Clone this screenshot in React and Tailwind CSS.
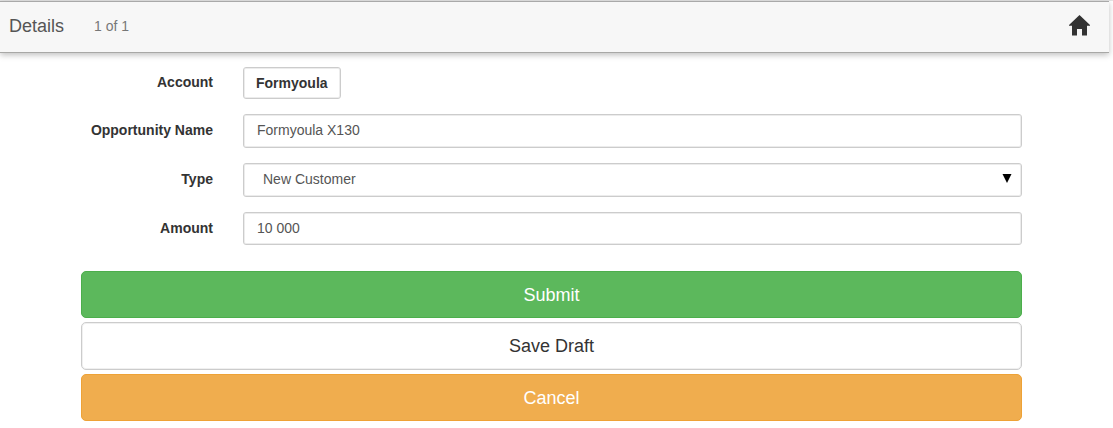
const labelClass = "w-[132px] shrink-0 pb-0.5 text-right text-sm font-bold text-[#333333]";
const fieldClass =
  "w-full rounded-[3px] border border-[#cccccc] bg-white px-[13px] pb-0.5 text-sm text-[#555555] shadow-[inset_0_0_0_1px_#ececec] outline-none";
const buttonClass = "w-full rounded-[5px] border text-lg";

function Header() {
  return (
    <header className="mr-1 flex h-[52px] items-center justify-between border-t border-b border-t-[#a9a9a9] border-b-[#a8a8a6] bg-[#f7f7f7] pr-[19px] pb-[3px] pl-[9px] shadow-[0_2px_6px_rgba(0,0,0,0.25)]">
      <div className="flex items-center gap-[30px]">
        <h1 className="text-lg text-[#555555]">Details</h1>
        <span className="text-sm text-[#777777]">1 of 1</span>
      </div>
      <a href="#home" aria-label="Home">
        <svg width="21" height="21" viewBox="0 0 21 21" fill="#333333" aria-hidden="true">
          <path d="M10.5 0 L21 10 V10.700 H18 V20.500 H13 V14 H8 V20.500 H3 V10.700 H0 V10 Z" />
        </svg>
      </a>
    </header>
  );
}

function Row({ id, label, children }) {
  return (
    <div className="flex items-center gap-[30px]">
      <label htmlFor={id} className={labelClass}>
        {label}
      </label>
      <div className="relative min-w-0 flex-1">{children}</div>
    </div>
  );
}

export default function App() {
  return (
    <div className="bg-white pb-[7px] font-['Liberation_Sans',Arial,sans-serif]">
      <div className="h-px bg-[#e4e4e4]" />
      <Header />
      <form className="pt-[14px] pr-[91px] pl-[81px]" onSubmit={(e) => e.preventDefault()}>
        <div className="mb-[26px] flex flex-col gap-[15px]">
          <Row id="account" label="Account">
            <button
              id="account"
              type="button"
              className="block h-8 rounded-[3px] border border-[#cccccc] bg-white px-3 text-sm font-bold text-[#333333] shadow-[inset_0_0_0_1px_#ececec]"
            >
              Formyoula
            </button>
          </Row>
          <Row id="name" label="Opportunity Name">
            <input id="name" type="text" defaultValue="Formyoula X130" className={`block h-[34px] ${fieldClass}`} />
          </Row>
          <Row id="type" label="Type">
            <select id="type" className={`block h-[34px] appearance-none indent-[6px] ${fieldClass}`}>
              <option>New Customer</option>
            </select>
            <svg
              className="pointer-events-none absolute top-[11px] right-[10px]"
              width="10"
              height="9"
              viewBox="0 0 10 9"
              aria-hidden="true"
            >
              <path d="M0.500 0 H9.500 L5 9 Z" fill="#000000" />
            </svg>
          </Row>
          <Row id="amount" label="Amount">
            <input id="amount" type="text" defaultValue="10 000" className={`block h-[33px] ${fieldClass}`} />
          </Row>
        </div>
        <div className="flex flex-col gap-1">
          <button type="submit" className={`h-[47px] border-[#4cae4c] bg-[#5cb85c] text-white ${buttonClass}`}>
            Submit
          </button>
          <button
            type="button"
            className={`h-12 border-[#cccccc] bg-white text-[#333333] shadow-[inset_0_0_0_1px_#f0f0f0] ${buttonClass}`}
          >
            Save Draft
          </button>
          <button type="button" className={`h-[47px] border-[#eea236] bg-[#f0ad4e] text-white ${buttonClass}`}>
            Cancel
          </button>
        </div>
      </form>
    </div>
  );
}
